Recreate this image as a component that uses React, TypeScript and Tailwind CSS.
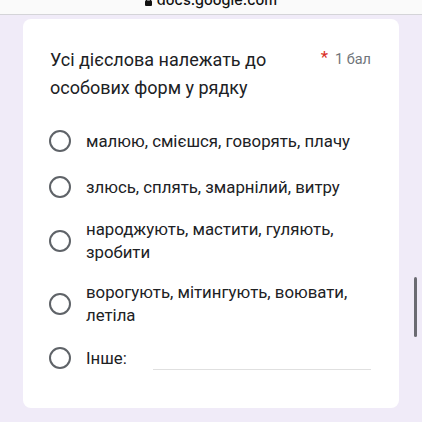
import React from "react";

const Radio = () => (
  <div className="w-[40px] h-[40px] flex items-center justify-center shrink-0">
    <div className="w-[22px] h-[22px] rounded-full border-[2px] border-[#5f6368]" />
  </div>
);

export default function App() {
  const font = { fontFamily: "Roboto, 'Noto Sans', sans-serif" };
  return (
    <div className="relative w-[422px] h-[422px] overflow-hidden bg-[#f0ebf8]" style={font}>
      <div className="h-[15px] bg-[#fafafa] border-b border-[#d4d4d8] overflow-hidden flex justify-center">
        <div className="flex items-center gap-[5px] mt-[-9px] h-[18px] text-[14.5px] leading-[18px] font-medium text-[#111]" style={{ fontFamily: "Inter, 'Liberation Sans', sans-serif" }}>
          <svg width="7" height="9" viewBox="0 0 7 9" className="mt-[3px]">
            <rect x="0" y="3.5" width="7" height="5.5" rx="1" fill="#111" />
            <path d="M1.5 4V2.5a2 2 0 0 1 4 0V4" stroke="#111" strokeWidth="1.2" fill="none" />
          </svg>
          <span>docs.google.com</span>
        </div>
      </div>

      <div className="mx-[23px] mt-[4px] h-[389px] bg-white rounded-[8px] pl-[27px] pr-[28px] pt-[27px]">
        <div className="flex justify-between">
          <div className="text-[18px] leading-[28px] text-[#202124] w-[240px]">
            Усі дієслова належать до особових форм у рядку
          </div>
          <div className="flex items-start gap-[7px] pt-[1px]">
            <span className="text-[#d93025] text-[17px] leading-[20px]">*</span>
            <span className="text-[#70757a] text-[14.5px] leading-[20px] pt-[3px]">1 бал</span>
          </div>
        </div>

        <div className="mt-[19px] ml-[-10px] text-[16.8px] leading-[23px] text-[#202124]">
          <div className="flex items-center gap-[6px]">
            <Radio />
            <span>малюю, смієшся, говорять, плачу</span>
          </div>
          <div className="flex items-center gap-[6px] mt-[6px]">
            <Radio />
            <span>злюсь, сплять, змарнілий, витру</span>
          </div>
          <div className="flex items-center gap-[6px] mt-[11px]">
            <Radio />
            <span className="w-[270px]">народжують, мастити, гуляють, зробити</span>
          </div>
          <div className="flex items-center gap-[6px] mt-[17px]">
            <Radio />
            <span className="w-[270px]">ворогують, мітингують, воювати, летіла</span>
          </div>
          <div className="flex items-center gap-[6px] mt-[11px]">
            <Radio />
            <span>Інше:</span>
            <div className="ml-[20px] mt-[22px] w-[225px] border-b border-[#e0e0e0]" />
          </div>
        </div>
      </div>

      <div className="absolute left-[414px] top-[277px] w-[3px] h-[60px] rounded-full bg-[#6b6b72]" />
    </div>
  );
}
